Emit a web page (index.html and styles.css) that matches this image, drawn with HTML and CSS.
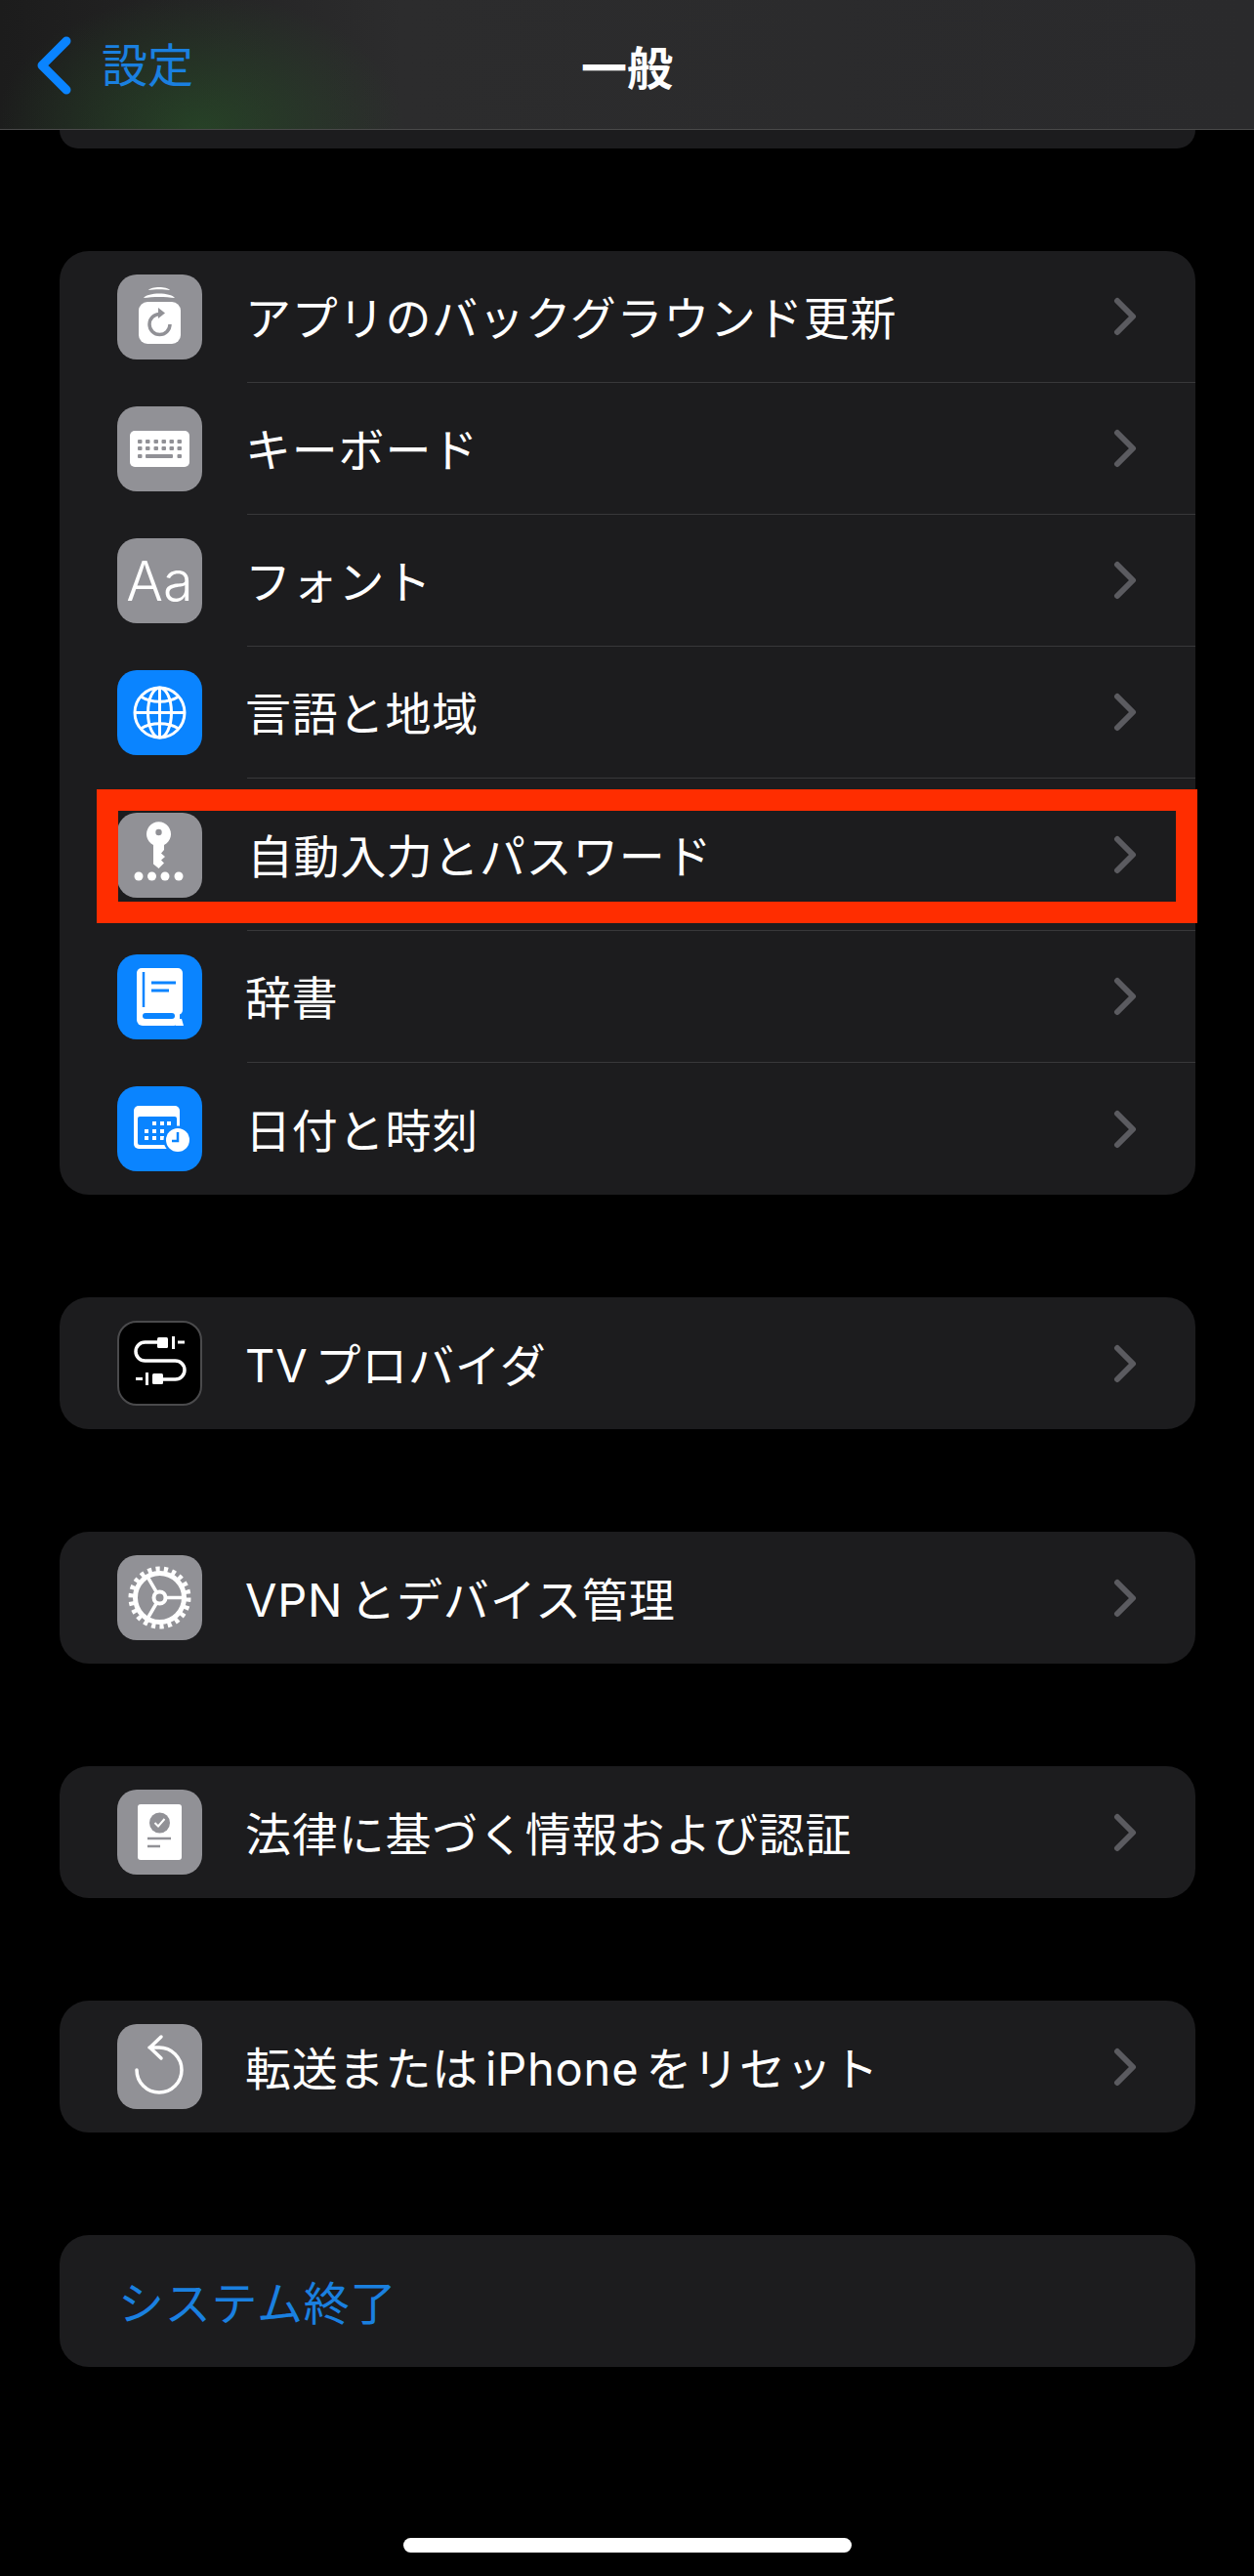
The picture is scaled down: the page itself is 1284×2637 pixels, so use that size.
FILE: index.html
```html
<!DOCTYPE html>
<html lang="ja">
<head>
  <meta charset="UTF-8" />
  <title>一般</title>
  <link rel="stylesheet" href="styles.css">
</head>
<body>

  <header class="nav">
    <div class="nav-back">
      <svg class="nav-chevron" viewBox="0 0 36 60"><polyline points="31,5 6,30 31,55" /></svg>
      <span>設定</span>
    </div>
    <h1 class="nav-title">一般</h1>
  </header>

  <main class="list">
    <div class="peek"></div>

    <section class="card card-first">
      <div class="row">
        <div class="icon gray">
          <svg viewBox="0 0 87 87">
            <path d="M32 16c3-4 19-4 22 0-6-1-16-1-22 0z" fill="#fff"/>
            <path d="M27 24c4-6 28-6 32 0-9-1.500-23-1.500-32 0z" fill="#fff"/>
            <rect x="22" y="28" width="43" height="43" rx="9" fill="#fff"/>
            <path d="M43.500 40.500A10.500 10.500 0 1 0 54 51" fill="none" stroke="#919196" stroke-width="3.500"/>
            <path d="M42 34l7 5.500-7 5.500z" fill="#919196"/>
          </svg>
        </div>
        <div class="row-body"><span class="label">アプリのバックグラウンド更新</span><svg class="chevron" viewBox="0 0 24 40"><polyline points="4,4 20,20 4,36" /></svg></div>
      </div>

      <div class="row">
        <div class="icon gray">
          <svg viewBox="0 0 87 87">
            <rect x="13" y="25" width="61" height="37" rx="5" fill="#fff"/>
            <g fill="#919196">
              <rect x="21" y="34" width="4.500" height="4" rx="1"/><rect x="29" y="34" width="4.500" height="4" rx="1"/><rect x="37.500" y="34" width="4.500" height="4" rx="1"/><rect x="45.500" y="34" width="4.500" height="4" rx="1"/><rect x="53.500" y="34" width="4.500" height="4" rx="1"/><rect x="61.500" y="34" width="4.500" height="4" rx="1"/>
              <rect x="21" y="41" width="4.500" height="4" rx="1"/><rect x="29" y="41" width="4.500" height="4" rx="1"/><rect x="37.500" y="41" width="4.500" height="4" rx="1"/><rect x="45.500" y="41" width="4.500" height="4" rx="1"/><rect x="53.500" y="41" width="4.500" height="4" rx="1"/><rect x="61.500" y="41" width="4.500" height="4" rx="1"/>
              <rect x="21" y="49" width="4.500" height="4" rx="1"/><rect x="29" y="49" width="28" height="4" rx="1"/><rect x="61.500" y="49" width="4.500" height="4" rx="1"/>
            </g>
          </svg>
        </div>
        <div class="row-body"><span class="label">キーボード</span><svg class="chevron" viewBox="0 0 24 40"><polyline points="4,4 20,20 4,36" /></svg></div>
      </div>

      <div class="row">
        <div class="icon gray"><span class="icon-aa">Aa</span></div>
        <div class="row-body"><span class="label">フォント</span><svg class="chevron" viewBox="0 0 24 40"><polyline points="4,4 20,20 4,36" /></svg></div>
      </div>

      <div class="row">
        <div class="icon blue">
          <svg viewBox="0 0 87 87">
            <g fill="none" stroke="#fff" stroke-width="3">
              <circle cx="43.500" cy="43.500" r="25.500"/>
              <ellipse cx="43.500" cy="43.500" rx="12" ry="25.500"/>
              <path d="M43.500 18v51M18 43.500h51"/>
              <path d="M24 27c11 7 28 7 39 0M24 60c11-7 28-7 39 0"/>
            </g>
          </svg>
        </div>
        <div class="row-body"><span class="label">言語と地域</span><svg class="chevron" viewBox="0 0 24 40"><polyline points="4,4 20,20 4,36" /></svg></div>
      </div>

      <div class="row row-tall">
        <div class="icon gray">
          <svg viewBox="0 0 87 87">
            <path d="M37 33a12.500 12.500 0 1 1 11 0v5l-3 3.500 4 3.500-4 3.500 3 3-5.500 5.500-5.500-4.500z" fill="#fff"/>
            <circle cx="42.500" cy="20" r="3.200" fill="#919196"/>
            <g fill="#fff">
              <circle cx="22" cy="65" r="4.500"/><circle cx="35.500" cy="65" r="4.500"/><circle cx="49" cy="65" r="4.500"/><circle cx="63" cy="65" r="4.500"/>
            </g>
          </svg>
        </div>
        <div class="row-body"><span class="label">自動入力とパスワード</span><svg class="chevron" viewBox="0 0 24 40"><polyline points="4,4 20,20 4,36" /></svg></div>
        <div class="highlight"></div>
      </div>

      <div class="row">
        <div class="icon blue">
          <svg viewBox="0 0 87 87">
            <rect x="20" y="14" width="47" height="48" rx="5" fill="#fff"/>
            <rect x="20" y="50" width="44" height="23" rx="6" fill="#fff"/>
            <path d="M60 66h6l2 7h-8z" fill="#fff"/>
            <path d="M27 18v36" stroke="#0a84ff" stroke-width="2.500"/>
            <rect x="26" y="60" width="33" height="6" rx="3" fill="#0a84ff"/>
            <path d="M35 29h25M35 37h18" stroke="#0a84ff" stroke-width="3"/>
          </svg>
        </div>
        <div class="row-body"><span class="label">辞書</span><svg class="chevron" viewBox="0 0 24 40"><polyline points="4,4 20,20 4,36" /></svg></div>
      </div>

      <div class="row row-last">
        <div class="icon blue">
          <svg viewBox="0 0 87 87">
            <rect x="17" y="20" width="47" height="44" rx="5" fill="#fff"/>
            <rect x="21" y="31" width="40" height="29" rx="2" fill="#0a84ff"/>
            <g fill="#fff">
              <rect x="36" y="36" width="4" height="4"/><rect x="44" y="36" width="4" height="4"/><rect x="51" y="36" width="4" height="4"/>
              <rect x="28" y="44" width="4" height="4"/><rect x="36" y="44" width="4" height="4"/><rect x="44" y="44" width="4" height="4"/>
              <rect x="28" y="51" width="4" height="4"/><rect x="36" y="51" width="4" height="4"/><rect x="44" y="51" width="4" height="4"/>
            </g>
            <circle cx="62" cy="55" r="14.500" fill="#0a84ff"/>
            <circle cx="62" cy="55" r="12" fill="#fff"/>
            <path d="M62 47v9h-6" fill="none" stroke="#0a84ff" stroke-width="2.500"/>
          </svg>
        </div>
        <div class="row-body"><span class="label">日付と時刻</span><svg class="chevron" viewBox="0 0 24 40"><polyline points="4,4 20,20 4,36" /></svg></div>
      </div>
    </section>

    <section class="card">
      <div class="row row-last">
        <div class="icon black">
          <svg viewBox="0 0 87 87">
            <path d="M41 22H28.500a9.500 9.500 0 0 0 0 19h31a9.500 9.500 0 0 1 0 19H47" fill="none" stroke="#fff" stroke-width="3.500"/>
            <rect x="41" y="17" width="11" height="11" rx="1.500" fill="#fff"/>
            <rect x="56" y="16" width="3" height="13" fill="#fff"/>
            <rect x="62" y="20.500" width="7" height="3" fill="#fff"/>
            <rect x="36" y="54" width="11" height="11" rx="1.500" fill="#fff"/>
            <rect x="29" y="53" width="3" height="13" fill="#fff"/>
            <rect x="19" y="58" width="7" height="3" fill="#fff"/>
          </svg>
        </div>
        <div class="row-body"><span class="label">TV プロバイダ</span><svg class="chevron" viewBox="0 0 24 40"><polyline points="4,4 20,20 4,36" /></svg></div>
      </div>
    </section>

    <section class="card">
      <div class="row row-last">
        <div class="icon gray">
          <svg viewBox="0 0 87 87">
            <g fill="none" stroke="#fff">
              <circle cx="43.500" cy="43.500" r="29" stroke-width="6" stroke-dasharray="4.140 4.140"/>
              <circle cx="43.500" cy="43.500" r="25" stroke-width="5"/>
              <circle cx="43.500" cy="43.500" r="6" stroke-width="4"/>
              <path d="M49 43.500h19M40.700 48.300L31 65M40.700 38.700L31 22" stroke-width="3.500"/>
            </g>
          </svg>
        </div>
        <div class="row-body"><span class="label">VPN とデバイス管理</span><svg class="chevron" viewBox="0 0 24 40"><polyline points="4,4 20,20 4,36" /></svg></div>
      </div>
    </section>

    <section class="card">
      <div class="row row-last">
        <div class="icon gray">
          <svg viewBox="0 0 87 87">
            <rect x="21" y="15" width="45" height="57" rx="3" fill="#fff"/>
            <circle cx="43.500" cy="34" r="10.500" fill="#919196"/>
            <path d="M38.500 34l3.500 3.500 6.500-7.500" fill="none" stroke="#fff" stroke-width="2"/>
            <path d="M31 50h24M31 58h13" stroke="#919196" stroke-width="2.500"/>
          </svg>
        </div>
        <div class="row-body"><span class="label">法律に基づく情報および認証</span><svg class="chevron" viewBox="0 0 24 40"><polyline points="4,4 20,20 4,36" /></svg></div>
      </div>
    </section>

    <section class="card">
      <div class="row row-last">
        <div class="icon gray">
          <svg viewBox="0 0 87 87">
            <path d="M33 24h10a23 23 0 1 1-23 23M45 13L33.500 24 45 35" fill="none" stroke="#fff" stroke-width="3.500" stroke-linecap="round"/>
          </svg>
        </div>
        <div class="row-body"><span class="label">転送または iPhone をリセット</span><svg class="chevron" viewBox="0 0 24 40"><polyline points="4,4 20,20 4,36" /></svg></div>
      </div>
    </section>

    <section class="card">
      <div class="row row-last row-plain">
        <span class="label link">システム終了</span>
      </div>
    </section>
  </main>

  <div class="home-bar"></div>

</body>
</html>
```

FILE: styles.css
```css
:root {
  --card: #1c1c1e;
  --line: #38383a;
  --gray: #919196;
  --blue: #0a84ff;
  --link: #1a80e0;
}

* {
  box-sizing: border-box;
}

body {
  margin: 0;
  background-color: #000;
  color: #fff;
  font-family: Inter, 'Noto Sans CJK JP', sans-serif;
}

.nav {
  position: relative;
  height: 133px;
  display: flex;
  align-items: center;
  justify-content: center;
  border-bottom: 1px solid #4a4a4a;
  background:
    radial-gradient(ellipse 210px 140px at 205px 133px, rgba(40, 85, 40, 0.6), rgba(40, 85, 40, 0)),
    linear-gradient(90deg, #1c1c1c, #2c2c2d 32%, #2a2a2c);
}

.nav-back {
  position: absolute;
  left: 37px;
  top: 37px;
  display: flex;
  align-items: center;
  gap: 31px;
  color: var(--link);
  font-size: 47px;
  line-height: 58px;
}

.nav-chevron {
  width: 36px;
  height: 60px;
}

.nav-chevron polyline {
  fill: none;
  stroke: var(--blue);
  stroke-width: 9;
  stroke-linecap: round;
  stroke-linejoin: round;
}

.nav-title {
  margin: 0;
  font-size: 47px;
  font-weight: 700;
}

.list {
  display: flex;
  flex-direction: column;
  gap: 105px;
  padding: 0 60px 0 61px;
}

.peek {
  height: 19px;
  background-color: var(--card);
  border-radius: 0 0 30px 30px;
}

.card {
  background-color: var(--card);
  border-radius: 30px;
}

.row {
  position: relative;
  height: 135px;
  display: flex;
  align-items: center;
  padding-left: 59px;
  gap: 46px;
}

.row-tall {
  height: 156px;
}

.row-tall .label {
  margin-left: 0;
  letter-spacing: 0.6px;
}

.row-plain {
  padding-left: 62px;
}

.row-body {
  flex: 1;
  height: 100%;
  display: flex;
  align-items: center;
  justify-content: space-between;
  padding-right: 60px;
  border-bottom: 1px solid var(--line);
}

.row-last .row-body {
  border-bottom: none;
}

.label {
  margin-left: -2px;
  padding-bottom: 3px;
  font-size: 47px;
  letter-spacing: 0.8px;
  word-spacing: -7px;
}

.link {
  color: var(--link);
}

.chevron {
  width: 24px;
  height: 40px;
}

.chevron polyline {
  fill: none;
  stroke: #5b5b60;
  stroke-width: 6;
  stroke-linecap: round;
  stroke-linejoin: round;
}

.icon {
  flex: none;
  width: 87px;
  height: 87px;
  border-radius: 20px;
  display: flex;
  align-items: center;
  justify-content: center;
}

.icon svg {
  display: block;
  width: 87px;
  height: 87px;
}

.gray {
  background-color: var(--gray);
}

.blue {
  background-color: var(--blue);
}

.black {
  background-color: #000;
  border: 2px solid #4a4a4c;
}

.black svg {
  margin: -2px;
  flex: none;
}

.icon-aa {
  font-size: 56px;
  font-weight: 300;
  line-height: 1;
}

/* red frame drawn on top of the screenshot */
.highlight {
  position: absolute;
  left: 38px;
  top: 11px;
  width: 1127px;
  height: 137px;
  border: 22px solid #ff2d00;
}

.home-bar {
  width: 459px;
  height: 15px;
  margin: 175px 0 0 413px;
  background-color: #fff;
  border-radius: 8px;
}
```
